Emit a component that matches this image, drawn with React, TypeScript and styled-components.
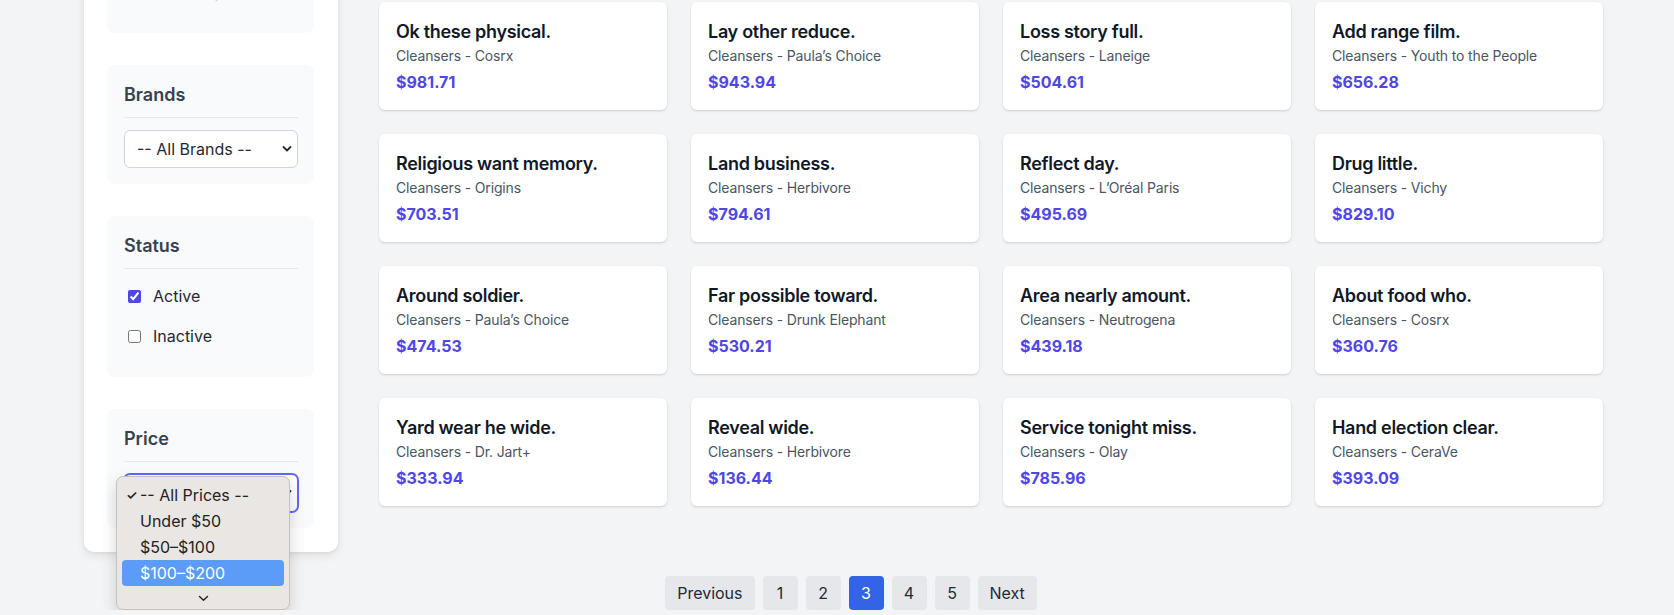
import React from 'react';
import styled, { createGlobalStyle } from 'styled-components';

type Product = { name: string; brand: string; price: string };

const products: Product[] = [
  { name: 'Ok these physical.', brand: 'Cosrx', price: '$981.71' },
  { name: 'Lay other reduce.', brand: 'Paula’s Choice', price: '$943.94' },
  { name: 'Loss story full.', brand: 'Laneige', price: '$504.61' },
  { name: 'Add range film.', brand: 'Youth to the People', price: '$656.28' },
  { name: 'Religious want memory.', brand: 'Origins', price: '$703.51' },
  { name: 'Land business.', brand: 'Herbivore', price: '$794.61' },
  { name: 'Reflect day.', brand: 'L’Oréal Paris', price: '$495.69' },
  { name: 'Drug little.', brand: 'Vichy', price: '$829.10' },
  { name: 'Around soldier.', brand: 'Paula’s Choice', price: '$474.53' },
  { name: 'Far possible toward.', brand: 'Drunk Elephant', price: '$530.21' },
  { name: 'Area nearly amount.', brand: 'Neutrogena', price: '$439.18' },
  { name: 'About food who.', brand: 'Cosrx', price: '$360.76' },
  { name: 'Yard wear he wide.', brand: 'Dr. Jart+', price: '$333.94' },
  { name: 'Reveal wide.', brand: 'Herbivore', price: '$136.44' },
  { name: 'Service tonight miss.', brand: 'Olay', price: '$785.96' },
  { name: 'Hand election clear.', brand: 'CeraVe', price: '$393.09' },
];

const categories = ['Cleansers', 'Moisturizers', 'Serums', 'Toners', 'Masks', 'Sunscreens', 'Specialty'];
const priceOptions = ['-- All Prices --', 'Under $50', '$50–$100', '$100–$200'];
const pages = ['1', '2', '3', '4', '5'];

const Chevron = () => (
  <svg width="10" height="7" viewBox="0 0 10 7" fill="none">
    <polyline points="1.5,1.5 5,5 8.5,1.5" stroke="#1f2937" strokeWidth="1.8" strokeLinecap="round" strokeLinejoin="round" />
  </svg>
);

const App: React.FC = () => {
  return (
    <>
      <GlobalStyle />
      <Layout>
        <Sidebar>
          <Section>
            <SectionTitle>Categories</SectionTitle>
            <CheckList $after={6}>
              {categories.map((c, i) => (
                <CheckRow key={c}>
                  <Checkbox type="checkbox" defaultChecked={i === 0} />
                  {c}
                </CheckRow>
              ))}
            </CheckList>
          </Section>

          <Section>
            <SectionTitle>Brands</SectionTitle>
            <SelectWrap>
              <Select defaultValue="all">
                <option value="all">-- All Brands --</option>
              </Select>
              <SelectArrow><Chevron /></SelectArrow>
            </SelectWrap>
          </Section>

          <Section>
            <SectionTitle>Status</SectionTitle>
            <CheckList>
              <CheckRow>
                <Checkbox type="checkbox" defaultChecked />
                Active
              </CheckRow>
              <CheckRow>
                <Checkbox type="checkbox" />
                Inactive
              </CheckRow>
            </CheckList>
          </Section>

          <Section>
            <SectionTitle>Price</SectionTitle>
            <SelectWrap>
              <Select defaultValue="all" $focused>
                <option value="all">-- All Prices --</option>
              </Select>
              <SelectArrow><Chevron /></SelectArrow>
              <Popup>
                {priceOptions.map((o, i) => (
                  <PopupItem key={o} $active={i === 3}>
                    {i === 0 && <Tick>✓</Tick>}
                    {o}
                  </PopupItem>
                ))}
                <PopupMore>
                  <svg width="11" height="7" viewBox="0 0 11 7" fill="none">
                    <polyline points="1.5,1.5 5.5,5.2 9.5,1.5" stroke="#222" strokeWidth="1.4" strokeLinecap="round" strokeLinejoin="round" />
                  </svg>
                </PopupMore>
              </Popup>
            </SelectWrap>
          </Section>
        </Sidebar>

        <Main>
          <Banner>
            <BannerTitle>Cleansers</BannerTitle>
            <BannerText>Gentle formulas for every skin type.</BannerText>
          </Banner>
          <Grid>
            {products.map((p) => (
              <Card key={p.name}>
                <CardTitle>{p.name}</CardTitle>
                <CardMeta>Cleansers - {p.brand}</CardMeta>
                <CardPrice>{p.price}</CardPrice>
              </Card>
            ))}
          </Grid>
        </Main>
      </Layout>

      <Pagination>
        <PageButton>Previous</PageButton>
        {pages.map((n) => (
          <PageButton key={n} $active={n === '3'}>{n}</PageButton>
        ))}
        <PageButton>Next</PageButton>
      </Pagination>
    </>
  );
};

export default App;

const GlobalStyle = createGlobalStyle`
  * { box-sizing: border-box; }
  body {
    margin: 0;
    background: #f3f4f6;
    font-family: Inter, 'Noto Sans', 'Liberation Sans', sans-serif;
    color: #1f2937;
    -webkit-font-smoothing: antialiased;
    overflow: hidden;
  }
`;

/* page is shown scrolled down, as in the capture */
const Layout = styled.div`
  display: flex;
  align-items: flex-start;
  gap: 41px;
  margin-top: -353px;
  padding: 0 71px 0 84px;
`;

const Sidebar = styled.aside`
  flex: 0 0 254px;
  background: #fff;
  border-radius: 10px;
  box-shadow: 0 4px 10px rgba(0, 0, 0, 0.08), 0 1px 3px rgba(0, 0, 0, 0.06);
  padding: 24px 24px 24px 23px;
  display: flex;
  flex-direction: column;
  gap: 32px;
`;

const Section = styled.section`
  background: #f9fafb;
  border-radius: 8px;
  padding: 16px 16px 16px 17px;
`;

const SectionTitle = styled.h3`
  margin: 0;
  font-size: 18px;
  line-height: 28px;
  font-weight: 600;
  color: #374151;
  padding-bottom: 8px;
  border-bottom: 1px solid #e5e7eb;
`;

const CheckList = styled.div<{ $after?: number }>`
  display: flex;
  flex-direction: column;
  margin: 7px 0 ${(p) => p.$after ?? 5}px;
`;

const CheckRow = styled.label`
  display: flex;
  align-items: center;
  gap: 12px;
  height: 40px;
  padding-left: 4px;
  font-size: 16px;
  color: #1f2937;
`;

const Checkbox = styled.input`
  width: 13px;
  height: 13px;
  margin: 0;
  accent-color: #4f46e5;
`;

const SelectWrap = styled.div`
  position: relative;
  margin-top: 12px;
`;

const Select = styled.select<{ $focused?: boolean }>`
  appearance: none;
  display: block;
  width: 100%;
  height: 38px;
  padding: 0 30px 0 12px;
  font-family: inherit;
  font-size: 16px;
  color: #1f2937;
  background: #fff;
  border: 1px solid ${(p) => (p.$focused ? '#6366f1' : '#d1d5db')};
  border-radius: 6px;
  box-shadow: ${(p) => (p.$focused ? '0 0 0 1px #6366f1' : 'none')};
  outline: none;
`;

const SelectArrow = styled.span`
  position: absolute;
  right: 6px;
  top: 50%;
  transform: translateY(-50%);
  display: flex;
  pointer-events: none;
`;

const Popup = styled.div`
  position: absolute;
  left: -8px;
  top: 2px;
  width: 174px;
  height: 134px;
  padding: 5px;
  background: #e9e6e4;
  border: 1px solid #c4c1bf;
  border-radius: 7px;
  box-shadow: 0 6px 16px rgba(0, 0, 0, 0.16);
  z-index: 10;
`;

const PopupItem = styled.div<{ $active?: boolean }>`
  position: relative;
  height: 26px;
  line-height: 26px;
  padding-left: 18px;
  border-radius: 4px;
  font-size: 16px;
  color: ${(p) => (p.$active ? '#fff' : '#222')};
  background: ${(p) => (p.$active ? '#5a9cf8' : 'transparent')};
`;

const Tick = styled.span`
  position: absolute;
  left: 4px;
  top: 0;
  font-size: 13px;
  font-weight: 600;
`;

const PopupMore = styled.div`
  display: flex;
  justify-content: center;
  padding-top: 9px;
`;

const Main = styled.main`
  flex: 1;
  min-width: 0;
`;

const Banner = styled.div`
  height: 331px;
  margin-bottom: 24px;
  padding: 32px;
  border-radius: 8px;
  background: #fff;
`;

const BannerTitle = styled.h1`
  margin: 0 0 8px;
  font-size: 28px;
  color: #111827;
`;

const BannerText = styled.p`
  margin: 0;
  color: #4b5563;
`;

const Grid = styled.div`
  display: grid;
  grid-template-columns: repeat(4, 1fr);
  gap: 24px;
`;

const Card = styled.div`
  background: #fff;
  border-radius: 6px;
  padding: 16px 17px;
  box-shadow: 0 1px 3px rgba(0, 0, 0, 0.1), 0 1px 2px rgba(0, 0, 0, 0.06);
`;

const CardTitle = styled.h2`
  margin: 0;
  font-size: 18px;
  line-height: 28px;
  font-weight: 600;
  letter-spacing: -0.3px;
  color: #111827;
`;

const CardMeta = styled.p`
  margin: 0;
  font-size: 14px;
  line-height: 20px;
  letter-spacing: -0.15px;
  color: #4b5563;
`;

const CardPrice = styled.p`
  margin: 4px 0 0;
  font-size: 16px;
  line-height: 24px;
  font-weight: 700;
  color: #4f46e5;
`;

const Pagination = styled.nav`
  display: flex;
  justify-content: center;
  gap: 8px;
  margin-top: 24px;
  padding-left: 28px;
`;

const PageButton = styled.button<{ $active?: boolean }>`
  min-width: 35px;
  height: 34px;
  padding: 0 12px;
  border: none;
  border-radius: 4px;
  font-family: inherit;
  font-size: 16px;
  color: ${(p) => (p.$active ? '#fff' : '#1f2937')};
  background: ${(p) => (p.$active ? '#3464e6' : '#e5e7eb')};
  cursor: pointer;
`;
